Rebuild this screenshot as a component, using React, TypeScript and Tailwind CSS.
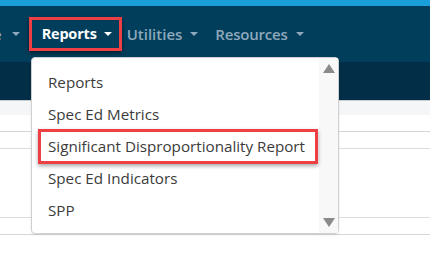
import React from 'react';

const items = ['Reports', 'Spec Ed Metrics', 'Significant Disproportionality Report', 'Spec Ed Indicators', 'SPP'];

const Caret = ({ className }: { className: string }) => (
    <span className={`inline-block w-0 h-0 border-l-[4px] border-r-[4px] border-t-[4px] border-l-transparent border-r-transparent ${className}`} />
);

const App = () => {
    return (
        <div className="relative w-[430px] h-[262px] overflow-hidden bg-white font-['Open_Sans',sans-serif]">
            <div className="h-[6px] bg-[#1a9fd9]" />
            {/* barra de navegación */}
            <nav className="h-[56px] bg-[#003e5c] flex items-center">
                <div className="flex items-center ml-[-7px] text-[15px] font-semibold text-[#8ea9bb]">
                    <span>e</span>
                    <Caret className="border-t-[#8ea9bb] ml-[10px]" />
                </div>
                <div className="ml-[9px] h-[34px] w-[93px] flex items-center pl-[10px] border-[3px] border-[#ee3f45] shadow-[0_2px_4px_rgba(0,0,0,0.5)] text-[14.5px] font-bold text-white tracking-[-0.2px]">
                    <span>Reports</span>
                    <Caret className="border-t-white ml-[7px]" />
                </div>
                <div className="ml-[5px] flex items-center text-[15px] font-semibold text-[#8ea9bb]">
                    <span>Utilities</span>
                    <Caret className="border-t-[#8ea9bb] ml-[8px]" />
                </div>
                <div className="ml-[17px] flex items-center text-[15px] font-semibold text-[#8ea9bb] tracking-[-0.2px]">
                    <span>Resources</span>
                    <Caret className="border-t-[#8ea9bb] ml-[8px]" />
                </div>
            </nav>
            <div className="h-[38px] bg-[#022f47]" />
            <div className="h-[15px] bg-[#f5f6f8] border-t border-[#c9ccd0]" />
            <div className="h-[17px] border-b border-[#d6d6d6]" />
            <div className="h-[17px] border-b border-[#dcdcdc]" />
            <div className="h-[69px] border-b border-[#dcdcdc]" />
            <div className="h-[17px] border-b border-[#d6d6d6]" />

            {/* menú desplegable */}
            <div className="absolute left-[31px] top-[57px] w-[308px] h-[177px] bg-white border border-[#d0d0d0] rounded-[4px] flex shadow-[0_1px_3px_rgba(0,0,0,0.08)]">
                <div className="relative flex-1 pt-[8px]">
                    {items.map((item, i) => (
                        <div key={i} className="h-[32px] flex items-center pl-[16px] text-[15.2px] text-[#3b3b3b]">
                            {item}
                        </div>
                    ))}
                    <div className="absolute left-[6px] top-[71px] w-[280px] h-[35px] border-[3px] border-[#ee3f45] shadow-[0_2px_4px_rgba(0,0,0,0.35)]" />
                </div>
                <div className="w-[19px] bg-[#f8f8f8] flex flex-col items-center justify-between py-[6px]">
                    <span className="w-0 h-0 border-l-[6px] border-r-[6px] border-b-[9px] border-l-transparent border-r-transparent border-b-[#8a8a8a]" />
                    <span className="w-0 h-0 border-l-[6px] border-r-[6px] border-t-[9px] border-l-transparent border-r-transparent border-t-[#8a8a8a]" />
                </div>
            </div>
        </div>
    );
};

export default App;
